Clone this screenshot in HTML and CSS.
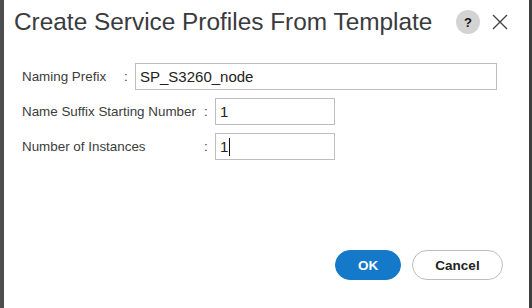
FILE: index.html
```html
<!DOCTYPE html>
<html lang="en">

<head>
    <meta charset="UTF-8">
    <meta name="viewport" content="width=device-width, initial-scale=1.0">
    <title>Create Service Profiles From Template</title>
    <link rel="stylesheet" href="styles.css">
</head>

<body>
    <div class="dialog">
        <div class="header">
            <h1 class="title">Create Service Profiles From Template</h1>
            <div class="tools">
                <span class="help">?</span>
                <svg class="close" width="16" height="16" viewBox="0 0 16 16">
                    <path d="M1 1 L15 15 M15 1 L1 15" stroke="#444" stroke-width="1.4" fill="none" />
                </svg>
            </div>
        </div>

        <div class="form">
            <div class="row">
                <span class="label prefix-label">Naming Prefix</span>
                <span class="colon">:</span>
                <div class="field wide">SP_S3260_node</div>
            </div>
            <div class="row">
                <span class="label long-label">Name Suffix Starting Number</span>
                <span class="colon">:</span>
                <div class="field short">1</div>
            </div>
            <div class="row">
                <span class="label long-label">Number of Instances</span>
                <span class="colon">:</span>
                <div class="field short">1<span class="caret"></span></div>
            </div>
        </div>

        <div class="footer">
            <button class="btn primary">OK</button>
            <button class="btn secondary">Cancel</button>
        </div>
    </div>
</body>

</html>
```

FILE: styles.css
```css
* {
    box-sizing: border-box;
}

body {
    margin: 0;
    font-family: "Liberation Sans", Arial, sans-serif;
    background-color: #fff;
}

.dialog {
    width: 532px;
    height: 308px;
    border-left: 4px solid #4d4d4d;
    border-right: 3px solid #3e3e3e;
    background-color: #fff;
    display: flex;
    flex-direction: column;
}

.header {
    display: flex;
    align-items: center;
    justify-content: space-between;
    height: 44px;
    padding: 0 21px 0 10px;
}

.title {
    margin: 0;
    font-size: 24.4px;
    font-weight: normal;
    color: #3a3a40;
}

.tools {
    display: flex;
    align-items: center;
    gap: 12px;
}

.help {
    width: 24px;
    height: 24px;
    border-radius: 50%;
    background-color: #d3d3d3;
    color: #111;
    font-weight: bold;
    font-size: 13px;
    display: flex;
    align-items: center;
    justify-content: center;
}

.close {
    display: block;
}

.form {
    display: flex;
    flex-direction: column;
    gap: 8px;
    padding: 19px 0 0 18px;
}

.row {
    display: flex;
    align-items: center;
    font-size: 13.4px;
    color: #3c3c3c;
}

.prefix-label {
    width: 102px;
}

.long-label {
    width: 182px;
}

.colon {
    width: 11px;
}

.field {
    height: 27px;
    border: 1px solid #bdbdbd;
    padding: 0 4px;
    display: flex;
    align-items: center;
    font-size: 15px;
    color: #222;
}

.wide {
    width: 362px;
}

.short {
    width: 120px;
}

.caret {
    display: inline-block;
    width: 1px;
    height: 18px;
    margin-left: 1px;
    background-color: #111;
}

.footer {
    margin-top: auto;
    display: flex;
    justify-content: flex-end;
    gap: 11px;
    padding: 0 26px 28px 0;
}

.btn {
    height: 30px;
    border-radius: 15px;
    font-family: "Liberation Sans", Arial, sans-serif;
    font-size: 13.5px;
    font-weight: bold;
}

.primary {
    width: 66px;
    background-color: #1479c9;
    border: 1px solid #1479c9;
    color: #fff;
}

.secondary {
    width: 91px;
    background-color: #fff;
    border: 1px solid #bdbdbd;
    color: #222;
}
```
